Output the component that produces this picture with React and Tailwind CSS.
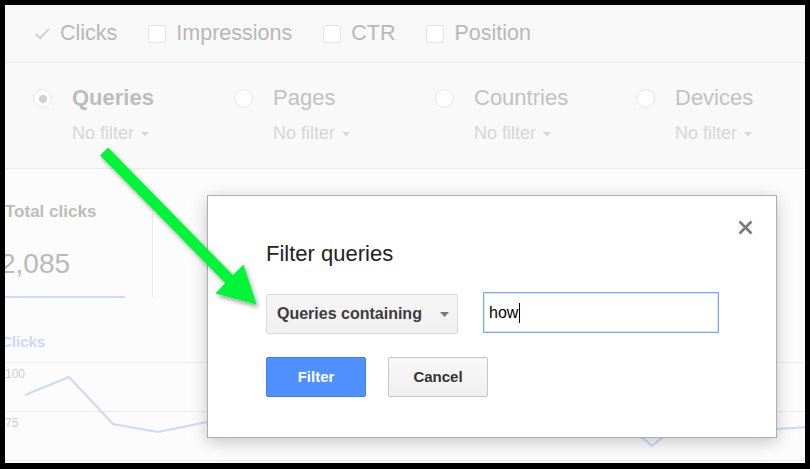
import React from "react";

const metrics = [
  { label: "Clicks", checked: true },
  { label: "Impressions" },
  { label: "CTR" },
  { label: "Position" },
];

const groups = [
  { label: "Queries", selected: true },
  { label: "Pages" },
  { label: "Countries" },
  { label: "Devices" },
];

// chart points, relative to the chart box (x from panel left, y from first gridline)
const linePoints =
  "20,33 64,15 108,62 153,70 202,60 295,48 395,58 495,53 595,63 638,76 647,84 658,75 715,70 772,67 805,65";

function SmallCaret({ color = "#d8d8d8" }) {
  return (
    <svg width="8" height="5" viewBox="0 0 8 5" className="ml-[7px] mt-[2px]">
      <path d="M0 0H8L4 4.5Z" fill={color} />
    </svg>
  );
}

function MetricToggle({ label, checked }) {
  return (
    <div className="flex items-center gap-[10px]">
      {checked ? (
        <svg width="15" height="13" viewBox="0 0 16 13">
          <path d="M1 7L5.5 11.5L15 1.5" fill="none" stroke="#cfcfcf" strokeWidth="2" />
        </svg>
      ) : (
        <div className="w-[18px] h-[18px] bg-white border border-[#e4e4e4] rounded-[2px]" />
      )}
      <span>{label}</span>
    </div>
  );
}

function GroupOption({ label, selected }) {
  return (
    <div className="w-[201px] shrink-0 flex items-start gap-[20px]">
      <div className="mt-[4px] w-[19px] h-[19px] rounded-full bg-white border border-[#e6e6e6] flex items-center justify-center">
        {selected && <div className="w-[8px] h-[8px] rounded-full bg-[#d0d0d0]" />}
      </div>
      <div>
        <div className={`text-[22px] leading-[26px] ${selected ? "font-bold text-[#bdbdbd]" : "text-[#c2c2c2]"}`}>
          {label}
        </div>
        <div className="mt-[11px] flex items-center text-[18px] leading-[22px] text-[#d6d6d6]">
          No filter
          <SmallCaret />
        </div>
      </div>
    </div>
  );
}

function FilterDialog() {
  return (
    <div className="absolute left-[202px] top-[190px] w-[570px] h-[243px] bg-white border border-[#adadad] shadow-[0_4px_16px_rgba(0,0,0,0.22)] pl-[58px] pt-[47px]">
      <svg width="15" height="15" viewBox="0 0 15 15" className="absolute left-[530px] top-[24px]">
        <path d="M1.5 1.5L13.5 13.5M13.5 1.5L1.5 13.5" stroke="#7a7a7a" strokeWidth="2.6" />
      </svg>

      <div className="text-[22px] leading-[22px] text-[#222]">Filter queries</div>

      <div className="mt-[27px] flex items-start">
        <div className="mt-[2px] w-[192px] h-[40px] bg-gradient-to-b from-[#f6f6f6] to-[#f0f0f0] border border-[#dcdcdc] rounded-[2px] pl-[10px] pr-[8px] flex items-center justify-between">
          <span className="text-[16px] font-bold text-[#3c3c3c]">Queries containing</span>
          <svg width="9" height="5" viewBox="0 0 9 5">
            <path d="M0 0H9L4.5 5Z" fill="#777" />
          </svg>
        </div>
        <div className="ml-[25px] w-[236px] h-[41px] bg-white border border-[#78a9f6] shadow-[inset_0_0_0_1px_#d3e3fc] pl-[5px] flex items-center text-[16px] text-black">
          how
          <span className="ml-[1px] w-px h-[20px] bg-black" />
        </div>
      </div>

      <div className="mt-[23px] flex gap-[22px]">
        <button className="w-[100px] h-[40px] bg-[#4d90fe] border border-[#3b7fee] rounded-[2px] text-white text-[15px] font-bold">
          Filter
        </button>
        <button className="w-[100px] h-[40px] bg-gradient-to-b from-[#f8f8f8] to-[#f0f0f0] border border-[#c6c6c6] rounded-[2px] text-[#333] text-[15px] font-bold">
          Cancel
        </button>
      </div>
    </div>
  );
}

export default function App() {
  return (
    <div className="relative w-[810px] h-[469px] bg-black pt-[5px] pl-[5px] font-['Liberation_Sans',Arial,sans-serif] overflow-hidden">
      <div className="relative w-[800px] h-[458px] bg-[#fcfcfc] overflow-hidden">
        {/* metric toggles */}
        <div className="h-[58px] bg-[#f8f8f8] border-b border-[#ececec] flex items-center pl-[30px] gap-[31px] text-[21.5px] text-[#b8b8b8]">
          {metrics.map((m) => (
            <MetricToggle key={m.label} {...m} />
          ))}
        </div>

        {/* grouping */}
        <div className="h-[106px] bg-[#f9f9f9] border-b border-[#ececec] flex pl-[28px] pt-[22px]">
          {groups.map((g) => (
            <GroupOption key={g.label} {...g} />
          ))}
        </div>

        {/* totals + chart */}
        <div className="pt-[21px]">
          <div className="flex">
            <div className="w-[148px] h-[108px] border-r border-[#ececec] pt-[12px]">
              <div className="text-[17px] leading-[20px] font-bold text-[#bcbcbc]">Total clicks</div>
              <div className="mt-[26px] -ml-[5px] text-[28px] leading-[32px] text-[#bababa]">2,085</div>
              <div className="mt-[16px] w-[120px] h-[2px] bg-[#c9dbf8]" />
            </div>
          </div>

          <div className="mt-[35px] -ml-[4px] text-[15px] leading-[18px] font-bold text-[#c8daf8]">Clicks</div>

          <div className="relative mt-[11px]">
            <div className="h-[49px] border-t border-[#ededed] pt-[4px] text-[12px] leading-[14px] text-[#cfcfcf]">100</div>
            <div className="h-[49px] border-t border-[#ededed] pt-[4px] text-[12px] leading-[14px] text-[#cfcfcf]">75</div>
            <div className="border-t border-[#ededed]" />
            <svg width="800" height="100" className="absolute left-0 top-0">
              <polyline points={linePoints} fill="none" stroke="#c9dbf8" strokeWidth="2" />
            </svg>
          </div>
        </div>

        <FilterDialog />
      </div>

      {/* annotation arrow */}
      <svg width="810" height="469" viewBox="0 0 810 469" className="absolute left-0 top-0 pointer-events-none">
        <defs>
          <filter id="arrowShadow" x="-20%" y="-20%" width="140%" height="140%">
            <feDropShadow dx="2" dy="3" stdDeviation="2" floodColor="#000" floodOpacity="0.35" />
          </filter>
        </defs>
        <polygon
          points="108,147.6 232.9,275.1 243.5,264.5 256.5,304.5 215.5,293.5 225.1,282.9 100.1,155.4"
          fill="#00f537"
          filter="url(#arrowShadow)"
        />
      </svg>
    </div>
  );
}
